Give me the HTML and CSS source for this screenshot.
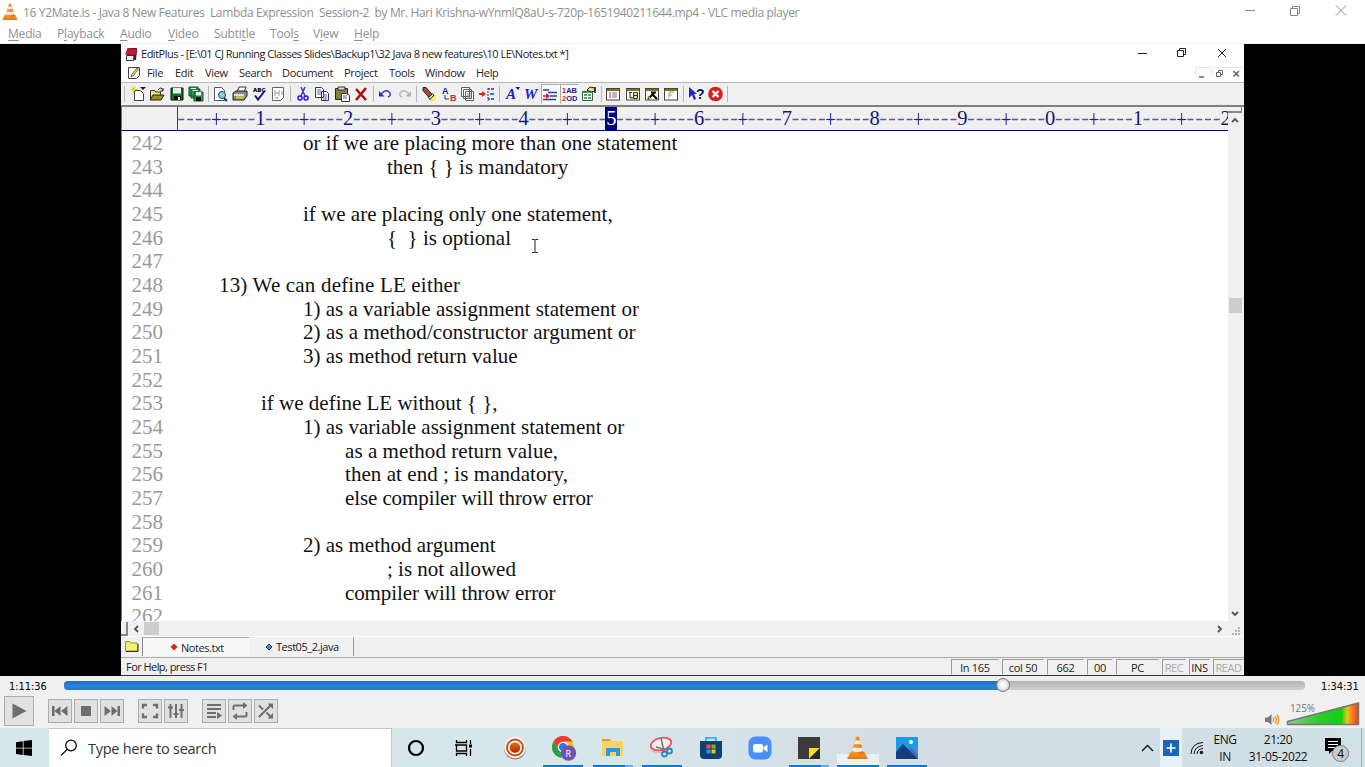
FILE: index.html
```html
<!DOCTYPE html>
<html lang="en">
<head>
<meta charset="utf-8">
<title>VLC media player</title>
<link rel="stylesheet" href="styles.css">
</head>
<body>
<svg class="defs" width="0" height="0">
  <defs>
    <linearGradient id="coneG"><stop offset="0" stop-color="#f6a042"/><stop offset=".5" stop-color="#f58a1c"/><stop offset="1" stop-color="#d9690a"/></linearGradient>
    <linearGradient id="volG"><stop offset="0" stop-color="#8fc98f"/><stop offset=".45" stop-color="#2bcb2b"/><stop offset=".76" stop-color="#14cf14"/><stop offset=".84" stop-color="#e8c813"/><stop offset=".91" stop-color="#f58220"/><stop offset="1" stop-color="#ee3a24"/></linearGradient>
    <linearGradient id="recG" x2="0" y2="1"><stop offset="0" stop-color="#f07010"/><stop offset="1" stop-color="#b02800"/></linearGradient>
    <symbol id="cone" viewBox="0 0 20 22">
      <path d="M3 15.5h14l2.5 6H.5z" fill="#f28a16"/><path d="M.5 20.5h19v1.2H.5z" fill="#c96808"/>
      <path d="M8.6 1.2Q10-.4 11.4 1.2L16 16.5q-6 3.4-12 0z" fill="url(#coneG)"/>
      <path d="M7.8 4.4h4.6l1.1 3.6H6.6zM5.6 11.2h9l1 3.2q-5.500 2-11 0z" fill="#ececec"/>
    </symbol>
    <symbol id="page" viewBox="0 0 16 16"><rect x="1.500" y="2.500" width="13" height="11.500" fill="#fff" stroke="#444"/><path d="M2 4h12" stroke="#777716" stroke-width="2"/></symbol>
  </defs>
</svg>
<header class="titlebar">
  <svg class="logo" width="16" height="17"><use href="#cone"/></svg>
  <span class="title">16 Y2Mate.is - Java 8 New Features&nbsp; Lambda Expression&nbsp; Session-2&nbsp; by Mr. Hari Krishna-wYnmlQ8aU-s-720p-1651940211644.mp4 - VLC media player</span>
  <svg class="winbtns" width="102" height="12" fill="none" stroke="#888"><path d="M0 5.500h10M45.500 3.500h7v7h-7zM47.500 3.500v-2h7v7h-2M91 .500l10 10M101 .500l-10 10"/></svg>
</header>
<nav class="menubar">
  <span><u>M</u>edia</span><span>P<u>l</u>ayback</span><span><u>A</u>udio</span><span><u>V</u>ideo</span><span>Subti<u>t</u>le</span><span>Tool<u>s</u></span><span>V<u>i</u>ew</span><span><u>H</u>elp</span>
</nav>

<main class="video">
<section class="editor">
  <div class="ed-title">
    <svg width="14" height="15" viewBox="0 0 14 15"><path d="M4 1h9v3l-1 9H2z" fill="#33272b"/><path d="M3.500 1l9.500 1-1 5-1.500 1L1 7.500z" fill="#c0163a"/><path d="M2.500 8.500h7.500l-.5 5H2.500z" fill="#eee" stroke="#333"/></svg>
    <span class="ed-name">EditPlus - [E:\01 CJ Running Classes Slides\Backup1\32 Java 8 new features\10 LE\Notes.txt *]</span>
    <svg class="ed-win" width="92" height="12" fill="none" stroke="#222"><path d="M0 6.500h9M39.500 3.500h6v6h-6zM41.500 3.500v-2h6v6h-2M80 2l8 8M88 2l-8 8"/></svg>
  </div>
  <div class="ed-menu">
    <svg width="14" height="14" viewBox="0 0 14 14"><path d="M1.500 1.500h11v8l-3 3h-8z" fill="#fff" stroke="#444"/><path d="M4 11l1-3 5-6 1.500 1-5 6.500z" fill="#ddd820" stroke="#555" stroke-width=".8"/></svg>
    <div class="ed-items"><span>File</span><span>Edit</span><span>View</span><span>Search</span><span>Document</span><span>Project</span><span>Tools</span><span>Window</span><span>Help</span></div>
    <svg class="mdi" width="49" height="12" fill="none" stroke="#666"><path d="M.5 8V.5H15V9M17.500 8V.5H49" stroke="#e6e6e6"/><path d="M4 10h5" stroke-width="1.500"/><path d="M21.500 5.500h4v4h-4zM23.500 5V3.500h4v4H26"/><path d="M38.500 4l5.500 5.500M44 4l-5.500 5.500" stroke-width="1.600"/></svg>
  </div>
  <div class="toolbar">
    <i class="grip"></i>
    <b><svg viewBox="0 0 16 16"><path d="M4.500 4.500h6l3 3v7h-9z" fill="#fff" stroke="#444"/><path d="M1 1l5 5M6 1L1 6M3.500 0v7M0 3.500h7" stroke="#e5e000"/><path d="M10 1h6l-3 3z" fill="#113"/></svg></b>
    <b><svg viewBox="0 0 16 16"><path d="M1.500 13.500v-9h4l1 1.500h5v3" fill="#eee480" stroke="#333"/><path d="M1 14l3-5h11l-3 5z" fill="#96921c" stroke="#222"/><path d="M9 4q3-4 5 0m0-2v3h-3" fill="none" stroke="#222"/></svg></b>
    <b><svg viewBox="0 0 16 16"><path d="M2 2h12v12H2z" fill="#087a1d" stroke="#111"/><path d="M4 2h8v5.500H4z" fill="#eee"/><path d="M5 10h7v4H5z" fill="#111"/><path d="M9 11h2v3H9z" fill="#eee"/></svg></b>
    <b><svg viewBox="0 0 16 16"><path d="M1 1h9v9H1zM3 3h9v9H3zM6 6h9v9H6z" fill="#36a04e" stroke="#153"/><path d="M3 2h5v1H3zM5 4h5v1H5zM8 6h5v3.500H8z" fill="#eee"/><path d="M8 11h5v4H8z" fill="#111"/></svg></b>
    <i class="sep"></i>
    <b><svg viewBox="0 0 16 16"><path d="M2.500 1.500h7l3 3v10h-10z" fill="#fff" stroke="#555"/><circle cx="10" cy="9" r="3.500" fill="#7bd6dc" stroke="#345"/><path d="M12 12l3 3" stroke="#16356b" stroke-width="2"/></svg></b>
    <b><svg viewBox="0 0 16 16"><path d="M5 6l2-5h7l-2 5" fill="#fff" stroke="#333"/><path d="M1 7l3-2h11v5l-3 4H1z" fill="#888" stroke="#222"/><path d="M2 9h10" stroke="#fff" stroke-width="1.500"/><path d="M4 11.500h8" stroke="#d7d721" stroke-width="2"/></svg></b>
    <b><svg viewBox="0 0 16 16"><text class="abc" x="2" y="6">ABC</text><path d="M4 9.500l3 4 7-9" fill="none" stroke="#181a82" stroke-width="2"/></svg></b>
    <b><svg viewBox="0 0 16 16"><path d="M2.500 1.500h11v10l-3 3h-8z" fill="#fff" stroke="#666"/><path d="M5 4v6M9 4v6M5 7h4M12 5v4M5 12h4" stroke="#999"/></svg></b>
    <i class="sep"></i>
    <b><svg viewBox="0 0 16 16" fill="none"><path d="M6 1l4 9M10 1L6 10" stroke="#2844b8" stroke-width="1.500"/><circle cx="5" cy="12" r="2" stroke="#21f" stroke-width="1.500"/><circle cx="11" cy="12" r="2" stroke="#21f" stroke-width="1.500"/></svg></b>
    <b><svg viewBox="0 0 16 16"><path d="M1.500 1.500h6l2 2v8h-8zM7.500 5.500h5l2 2v7h-7z" fill="#fff" stroke="#335"/><path d="M3 4h4M3 6h4M3 8h4M9 9h4M9 11h4M9 13h4" stroke="#4c60bb"/></svg></b>
    <b><svg viewBox="0 0 16 16"><path d="M1.500 2.500h12v11h-12z" fill="#84803d" stroke="#222"/><path d="M4 1h7v3H4z" fill="#ddd" stroke="#333"/><path d="M7.500 7.500h5l3 2v6h-8z" fill="#fff" stroke="#335"/><path d="M9 10h4M9 12h4" stroke="#4c60bb"/></svg></b>
    <b><svg viewBox="0 0 16 16"><path d="M3 3l10 11M13 2L3 14" stroke="#b00d0d" stroke-width="2.600"/></svg></b>
    <i class="sep"></i>
    <b><svg viewBox="0 0 16 16" fill="none" stroke="#2330cc" stroke-width="1.400"><path d="M4 8q6-6 9-1 1 3-2 4"/><path d="M2 5v5.500h5.500z" fill="#2330cc" stroke="none"/></svg></b>
    <b><svg viewBox="0 0 16 16" fill="none" stroke="#b4b4b4" stroke-width="1.400"><path d="M12 8Q6 2 3 7q-1 3 2 4"/><path d="M14 5v5.500H8.500z" fill="#b4b4b4" stroke="none"/></svg></b>
    <i class="sep"></i>
    <b><svg viewBox="0 0 16 16"><path d="M9 12l5-5 1 8-6 0z" fill="#f3ef55"/><path d="M2 1.500h3l6 7-3 3-6-7z" fill="#a54836" stroke="#222"/><path d="M7.500 11.500l4-3.500 1.500 1-4 4.500z" fill="#eee" stroke="#222"/></svg></b>
    <b><svg viewBox="0 0 16 16" fill="none"><text class="let" x="1" y="8" fill="#229">A</text><text class="let" x="9" y="15" fill="#d22">B</text><path d="M4 9v4h4" stroke="#338"/></svg></b>
    <b><svg viewBox="0 0 16 16"><path d="M1.500 1.500h8v9h-8zM3.500 3.500h8v9h-8zM5.500 5.500h8v9h-8z" fill="#fff" stroke="#565"/><path d="M7 8h5M7 10h5M7 12h5" stroke="#777"/></svg></b>
    <b><svg viewBox="0 0 16 16"><path d="M0 8h5" stroke="#d22" stroke-width="2"/><path d="M3 5l4 3-4 3z" fill="#d22"/><path d="M9 2v13" stroke="#223b9e" stroke-dasharray="2 1"/><path d="M9 3h2M12 3h3M11 8h4M9 13h2M12 13h3" stroke="#223b9e" stroke-width="1.500"/></svg></b>
    <i class="sep"></i>
    <b><svg viewBox="0 0 16 16"><text class="big" x="2" y="13">A</text><path d="M11.500 1h4.500l-2 3z" fill="#119"/></svg></b>
    <b><svg viewBox="0 0 16 16"><text class="big" x="1" y="13">W</text></svg></b>
    <b class="on"><svg viewBox="0 0 16 16"><path d="M1 4h6M6 6.500h9M8 10h7M1 13.500h13" stroke="#223b9e" stroke-width="1.300"/><path d="M1 10h5" stroke="#d22" stroke-width="1.500"/><path d="M4 7l4 3-4 3z" fill="#d22"/></svg></b>
    <b class="on"><svg viewBox="0 0 16 16"><text class="num" x="0" y="7"><tspan fill="#d22">1</tspan>AB</text><text class="num" x="0" y="15"><tspan fill="#d22">2</tspan>OD</text></svg></b>
    <b><svg viewBox="0 0 16 16"><path d="M1.500 5.500h10v9h-10z" fill="#fff" stroke="#276b35"/><path d="M1 6h11M3 9h3M3 12h3M7 9h3M7 12h3" stroke="#2c7a40" stroke-width="1.500"/><path d="M6 4l3-3 5 1v3l-4 1z" fill="#e5df6e" stroke="#222"/><path d="M14 1v6" stroke="#222" stroke-width="1.500"/></svg></b>
    <i class="sep"></i>
    <b><svg viewBox="0 0 16 16"><use href="#page"/><path d="M4 7h2M4 9h2M4 11h2" stroke="#d22"/><path d="M7 7h5M7 9h5M7 11h5" stroke="#777"/></svg></b>
    <b><svg viewBox="0 0 16 16"><use href="#page"/><path d="M4 6.500h3M5 7v5h3M8.500 6.500h4v6h-4zM8.500 9.500h4" fill="#dda" stroke="#333"/></svg></b>
    <b><svg viewBox="0 0 16 16"><use href="#page"/><path d="M4 13l6-6M7 6.500h5M8 8l5 5" stroke="#111" stroke-width="2.200"/><path d="M4 10l2 3" stroke="#b8ad22" stroke-width="1.500"/></svg></b>
    <b><svg viewBox="0 0 16 16"><use href="#page"/><path d="M6 12V6h5M6 9h3" fill="none" stroke="#999"/></svg></b>
    <i class="sep"></i>
    <b><svg viewBox="0 0 16 16"><path d="M1 1l8 7H6l2 5-2 1-2-5-3 3z" fill="#1626dd"/><text class="q" x="8" y="13">?</text></svg></b>
    <b><svg viewBox="0 0 16 16"><circle cx="8.500" cy="8" r="7.300" fill="#dc2018"/><path d="M5.500 5l6 6M11.500 5l-6 6" stroke="#fff" stroke-width="2.300"/></svg></b>
    <i class="sep"></i>
  </div>
  <div class="work">
    <div class="doc">
      <svg class="ruler" width="1106" height="24">
        <path d="M55.500 0v24" stroke="#3333aa"/>
        <path d="M56.300 12.500H1106" stroke="#5454a8" stroke-width="1.300" stroke-dasharray="6 2.775"/>
        <g class="ticks"></g>
        <rect x="483" y="0" width="12" height="23" fill="#000080"/>
      </svg>
      <div class="code">
        <div><i>242</i><p class="t3">or if we are placing more than one statement</p></div>
        <div><i>243</i><p class="t5">then { } is mandatory</p></div>
        <div><i>244</i></div>
        <div><i>245</i><p class="t3">if we are placing only one statement,</p></div>
        <div><i>246</i><p class="t5">{&nbsp; } is optional</p></div>
        <div><i>247</i></div>
        <div><i>248</i><p class="t1 wide">13) We can define LE either</p></div>
        <div><i>249</i><p class="t3">1) as a variable assignment statement or</p></div>
        <div><i>250</i><p class="t3 loose">2) as a method/constructor argument or</p></div>
        <div><i>251</i><p class="t3">3) as method return value</p></div>
        <div><i>252</i></div>
        <div><i>253</i><p class="t2">if we define LE without { },</p></div>
        <div><i>254</i><p class="t3">1) as variable assignment statement or</p></div>
        <div><i>255</i><p class="t4 loose">as a method return value,</p></div>
        <div><i>256</i><p class="t4 loose">then at end ; is mandatory,</p></div>
        <div><i>257</i><p class="t4 tight">else compiler will throw error</p></div>
        <div><i>258</i></div>
        <div><i>259</i><p class="t3">2) as method argument</p></div>
        <div><i>260</i><p class="t5">; is not allowed</p></div>
        <div><i>261</i><p class="t4 tight">compiler will throw error</p></div>
        <div><i>262</i></div>
        <svg class="ibeam" width="8" height="14" fill="none" stroke="#222"><path d="M1 .500h2.500l.5.500.5-.5H7M4 1v12M1 13.500h2.500l.5-.5.5.5H7"/></svg>
      </div>
    </div>
    <div class="vscroll">
      <span class="split"></span>
      <svg width="8" height="6" fill="none" stroke="#555" stroke-width="1.800"><path d="M1 5l3-3 3 3"/></svg>
      <span class="vthumb"></span>
      <svg width="8" height="6" fill="none" stroke="#555" stroke-width="1.800"><path d="M1 1l3 3 3-3"/></svg>
    </div>
  </div>
  <div class="hscroll">
    <span class="hsplit"></span>
    <svg width="6" height="8" fill="none" stroke="#555" stroke-width="1.800"><path d="M5 1L2 4l3 3"/></svg>
    <span class="hthumb"></span>
    <svg class="hr" width="6" height="8" fill="none" stroke="#555" stroke-width="1.800"><path d="M1 1l3 3-3 3"/></svg>
    <svg class="size" width="8" height="8" fill="#b5b5b5"><path d="M6 0h2v2H6zM3 3h2v2H3zM6 3h2v2H6zM0 6h2v2H0zM3 6h2v2H3zM6 6h2v2H6z"/></svg>
  </div>
  <div class="tabs">
    <svg width="21" height="20"><path d="M4.500 4.500h4l1 1.500h7v8h-12z" fill="#f3ef78" stroke="#999333"/><path d="M5 14.500h12V7" fill="none" stroke="#333"/></svg>
    <div class="tab active"><svg width="8" height="8"><path d="M4 .5L7.500 4 4 7.500.5 4z" fill="#d42a1c"/></svg>Notes.txt</div>
    <div class="tab"><svg width="8" height="8"><path d="M4 1L7 4 4 7 1 4z" fill="#2a96dc" stroke="#237"/></svg>Test05_2.java</div>
  </div>
  <div class="status"><span class="help">For Help, press F1</span><span class="cell">ln 165</span><span class="cell">col 50</span><span class="cell">662</span><span class="cell">00</span><span class="cell">PC</span><span class="cell dim">REC</span><span class="cell">INS</span><span class="cell dim">READ</span></div>
</section>
</main>

<section class="controls">
  <div class="seekrow"><span class="time">1:11:36</span><div class="seek"><div class="played"></div><span class="knob"></span></div><span class="time end">1:34:31</span></div>
  <div class="btnrow">
    <button class="play"><svg width="28" height="28"><path d="M7.500 6.500L21.500 14l-14 7.500z" fill="#6e6e6e"/></svg></button>
    <div class="grp">
      <button><svg width="22" height="22" fill="#6e6e6e"><path d="M3 6h2.500v10H3zM11.500 6v10L5.500 11zM18.500 6v10l-6.500-5z"/></svg></button>
      <button><svg width="22" height="22" fill="#6e6e6e"><path d="M6 6h10v10H6z"/></svg></button>
      <button><svg width="22" height="22" fill="#6e6e6e"><path d="M16.500 6H19v10h-2.500zM10.500 6v10l6-5zM3.500 6v10l6.500-5z"/></svg></button>
    </div>
    <div class="grp">
      <button><svg width="22" height="22" fill="none" stroke="#6e6e6e" stroke-width="2.400"><path d="M4 8.500V5h4M14 5h4v3.500M4 13.500V17h4M14 17h4v-3.500"/></svg></button>
      <button><svg width="22" height="22" fill="none" stroke="#6e6e6e" stroke-width="2"><path d="M5.500 4v14M11 4v14M16.500 4v14M3 7.500h5M8.500 14h5M14 10h5"/></svg></button>
    </div>
    <div class="grp">
      <button><svg width="22" height="22" fill="none" stroke="#6e6e6e" stroke-width="2"><path d="M4 5h14M4 9h14M4 13h9M4 17h9"/><path d="M14 12l5 3.500-5 3.500z" fill="#6e6e6e" stroke="none"/></svg></button>
      <button><svg width="22" height="22" fill="none" stroke="#6e6e6e" stroke-width="2"><path d="M4.500 10V6.500q0-1 1-1H15M17.500 12v3.500q0 1-1 1H7"/><path d="M14 2l4.500 3.500L14 9zM8 13l-4.500 3.500L8 20z" fill="#6e6e6e" stroke="none"/></svg></button>
      <button><svg width="22" height="22" fill="none" stroke="#6e6e6e" stroke-width="2"><path d="M4 5.500l4 4M11.500 12.500l4 4M4 17L15.500 5.500"/><path d="M12.500 3.500H18V9zM18 13v5.500h-5.500z" fill="#6e6e6e" stroke="none"/></svg></button>
    </div>
    <div class="volume">
      <svg width="16" height="14" fill="none"><path d="M1 4.500h3L7.500 1v11L4 9H1z" fill="#777"/><path d="M9 4.500q1.500 2 0 4.500M11 3q2.600 3.500 0 7.500M13 1.500q3.600 5 0 10.500" stroke="#f09a2c" stroke-width="1.400"/></svg>
      <div class="meter"><svg width="74" height="24"><path d="M1.500 19.500L72.500 1v21.500h-71z" fill="url(#volG)" stroke="#777" stroke-width="1.500" stroke-linejoin="round"/></svg><span class="pct">125%</span></div>
    </div>
  </div>
</section>

<footer class="taskbar">
  <div class="start"><svg width="16" height="16"><path d="M0 2.200l6.800-1v6.500H0zM7.600 1.100L16 0v7.700H7.600zM0 8.400h6.800V15L0 14zM7.600 8.400H16V16l-8.400-1.100z"/></svg></div>
  <div class="search"><svg width="18" height="18" fill="none" stroke="#111" stroke-width="1.300"><circle cx="11" cy="6.500" r="5.300"/><path d="M7 10.500L1 16.500"/></svg><span>Type here to search</span></div>
  <div class="apps">
    <div><svg width="18" height="18" fill="none" stroke="#000" stroke-width="2.200"><circle cx="9" cy="9" r="7"/></svg></div>
    <div><svg class="back" width="18" height="16" fill="none" stroke="#000" stroke-width="1.300"><path d="M1.500 0v2.500h10V0M1.500 16v-2.500h10V16M0 5h11.500v6H1.500V5M15.500 0v4M15.500 9v7"/><path d="M14 4.500h3v3h-3z" fill="#000" stroke="none"/></svg></div>
    <div><svg class="fwd" width="24" height="24"><circle cx="12" cy="12.500" r="10.800" fill="#a56b58"/><circle cx="12" cy="11.500" r="10.700" fill="#fff"/><circle cx="12" cy="11.500" r="8" fill="#fff" stroke="#d04a10" stroke-width="2"/><circle cx="12" cy="11.500" r="5.300" fill="url(#recG)"/></svg></div>
    <div class="run"><svg class="fwd" width="26" height="26"><circle cx="12" cy="12" r="11" fill="#f9c42d"/><path d="M2.500 6.500A11 11 0 0 1 21.500 6.500H12l-4.500 8z" fill="#e83e31"/><path d="M2.500 6.500l5.500 9 4 2-2 5.400A11 11 0 0 1 2.500 6.500" fill="#2b9f4b"/><circle cx="12" cy="12" r="5.200" fill="#fff"/><circle cx="12" cy="12" r="4" fill="#2b79e3"/><circle cx="17.500" cy="18" r="7.700" fill="#7252b5"/><text class="r" x="14.500" y="21.500">R</text></svg></div>
    <div class="run multi"><svg class="fwd" width="22" height="20"><path d="M0 1h8l1 2H0z" fill="#d9a01b"/><path d="M0 3h21v15H0z" fill="#fbd263"/><path d="M4 10h14v8h-4v-4H8v4H4z" fill="#2f96e6"/></svg></div>
    <div class="run"><svg class="fwd" width="26" height="24" fill="none"><ellipse cx="12" cy="8" rx="10.500" ry="6" transform="rotate(-14 12 8)" fill="#f5eded" stroke="#e45557" stroke-width="1.800"/><path d="M2 13q2 4 10 3" stroke="#f3a8a8" stroke-width="1.500"/><path d="M12 2l3 13M7 11l11 3" stroke="#777" stroke-width="1.500"/><circle cx="15.500" cy="18" r="2.500" stroke="#2789ba" stroke-width="1.800"/><circle cx="20.500" cy="15" r="2.500" stroke="#2789ba" stroke-width="1.800"/></svg></div>
    <div><svg class="fwd" width="24" height="24"><path d="M7 5V2h10v3" fill="none" stroke="#35bff0" stroke-width="2"/><path d="M1 5h22v14q0 4-4 4H5q-4 0-4-4z" fill="#123f75"/><path d="M7.500 8.500h4v4h-4z" fill="#f25022"/><path d="M12.500 8.500h4v4h-4z" fill="#7fba00"/><path d="M7.500 13.500h4v4h-4z" fill="#00a4ef"/><path d="M12.500 13.500h4v4h-4z" fill="#ffb900"/></svg></div>
    <div><svg width="24" height="24"><rect x=".5" y=".5" width="23" height="23" rx="7" fill="#4b8ef8"/><rect x="5" y="8" width="10" height="8.500" rx="2" fill="#fff"/><path d="M15.500 11l4-2.500v7.500l-4-2.500z" fill="#fff"/></svg></div>
    <div class="run multi"><svg width="22" height="22"><path d="M0 0h22v22H0z" fill="#3b3b3b"/><path d="M11 11h11L11 22z" fill="#ffdc18"/><path d="M22 11v11H11z" fill="#2a2a2a"/></svg></div>
    <div class="run current"><svg width="21" height="23"><use href="#cone"/></svg></div>
    <div class="run"><svg width="22" height="22"><path d="M0 0h22v22H0z" fill="#1c9ce6"/><path d="M22 9v13H9z" fill="#5f7fd6"/><path d="M10 14l5-4 7 8v4z" fill="#4a6cc2"/><path d="M0 15l7-8 15 15H0z" fill="#123f7c"/><circle cx="15" cy="5" r="2" fill="#fff"/></svg></div>
  </div>
  <div class="tray">
    <svg class="chev" width="13" height="8" fill="none" stroke="#111" stroke-width="1.400"><path d="M1 7l5.500-5.500L12 7"/></svg>
    <div class="plus"><svg width="16" height="16"><path d="M0 0h16v16H0z" fill="#1b66bb"/><path d="M3.500 8h9M8 3.500v9" stroke="#fff" stroke-width="1.600"/></svg></div>
    <svg class="wifi" width="14" height="14" fill="none" stroke="#111"><path d="M1 13Q1.500 2 13 1.500M4 13Q4.500 5.500 13 4.500M7 13q.5-5 6-5.500"/><circle cx="11.500" cy="11.500" r="1.700" fill="#111" stroke="none"/></svg>
    <div class="two lang"><span>ENG</span><span>IN</span></div>
    <div class="two clock"><span>21:20</span><span>31-05-2022</span></div>
    <svg class="note" width="26" height="26"><path d="M0 0h16v13H7l-3 3v-3H0z"/><path d="M3 3.500h10M3 6.500h10M3 9.500h7" stroke="#fff" stroke-width="1.200"/><circle cx="15.500" cy="15.500" r="8" fill="#ccc" stroke="#777"/><text x="12.300" y="20">4</text></svg>
    <i class="peek"></i>
  </div>
</footer>
<script src="ruler.js"></script>
</body>
</html>
```
FILE: ruler.js
```js
// Fills the column ruler: a figure every ten columns, a cross at every fifth.
(function () {
  var NS = 'http://www.w3.org/2000/svg', step = 8.775, origin = 50.5;
  var ruler = document.querySelector('.ruler');
  var ticks = ruler.querySelector('.ticks');
  function add(parent, name, attrs, text) {
    var el = document.createElementNS(NS, name);
    for (var key in attrs) el.setAttribute(key, attrs[key]);
    if (text) el.textContent = text;
    parent.appendChild(el);
  }
  for (var col = 5; col <= 120; col += 5) {
    var x = origin + col * step;
    if (col % 10) {
      add(ticks, 'path', { d: 'M' + x + ' 6v12M' + (x - 4.500) + ' 12.500h9', stroke: '#22228c' });
    } else {
      add(ticks, 'rect', { x: x - 5, y: 5, width: 10, height: 15, fill: '#f0f0f0' });
      add(ruler, 'text', { x: x, y: 18, 'class': col === 50 ? 'here' : 'digit' }, String(col / 10 % 10));
    }
  }
})();
```
FILE: styles.css
```css
* { box-sizing: border-box; }
body { margin: 0; width: 1365px; height: 767px; overflow: hidden; display: flex; flex-direction: column; font-family: "Open Sans", "Noto Sans", sans-serif; background: #f0f0f0; }
svg { display: block; flex: none; }
.defs { position: absolute; }
i { font-style: normal; }
p { margin: 0; }

.titlebar { height: 24px; flex: none; background: #fff; display: flex; align-items: center; padding: 0 18px 0 2px; color: #8f8f8f; }
.title { margin-left: 5px; font-size: 12px; letter-spacing: -0.35px; white-space: nowrap; }
.logo { margin-top: -2px; }
.winbtns { margin-left: auto; margin-top: -3px; }
.menubar { height: 20px; flex: none; background: #fff; padding-left: 8px; display: grid; grid-template-columns: 49px 63px 48px 46px 56px 43px 41px 40px; line-height: 20px; font-size: 12px; letter-spacing: -0.2px; color: #8f8f8f; border-bottom: 1px solid #f2f2f2; }
.menubar u { text-underline-offset: 2px; }

.video { height: 632px; flex: none; background: #000; padding: 0 121px; }
.editor { height: 632px; width: 1123px; background: #f0f0f0; display: flex; flex-direction: column; border-bottom: 1px solid #333; font-size: 11px; color: #222; }
.editor > div { flex: none; }
.ed-title { height: 20px; background: #fff; display: flex; align-items: center; padding: 0 14px 0 3px; }
.ed-name { margin: -2px 0 0 3px; letter-spacing: -0.485px; white-space: nowrap; }
.ed-win { margin-left: auto; margin-top: -2px; }
.ed-menu { height: 18px; background: #fff; display: flex; align-items: center; padding: 0 0 0 6px; }
.ed-items { margin: -2px 0 0 6px; display: grid; grid-template-columns: 28px 30px 34px 43px 62px 45px 36px 51px 40px; letter-spacing: -0.32px; }
.mdi { margin-left: auto; margin-top: -1px; }
.toolbar { height: 23px; border-top: 1px solid #b4b4b4; display: flex; align-items: center; }
.toolbar b { width: 19.35px; height: 20px; display: flex; align-items: center; justify-content: center; }
.toolbar b svg { width: 16px; height: 16px; overflow: visible; }
.toolbar .on { background: #f8f8f8; border: 1px solid #aaa; border-right-color: #fff; border-bottom-color: #fff; }
.grip, .sep { width: 5.1px; height: 16px; flex: none; background: linear-gradient(#b5b5b5, #b5b5b5) center / 1px 100% no-repeat; }
.grip { width: 7.3px; }
.abc { font: bold 5.500px "DejaVu Sans", sans-serif; }
.let { font: bold 9px "Liberation Sans", sans-serif; }
.big { font: italic bold 15px "Liberation Serif", serif; fill: #1522cc; }
.num { font: bold 7.5px "Liberation Sans", sans-serif; fill: #228; }
.q { font: bold 14px "Liberation Sans", sans-serif; fill: #114; }

.work { height: 516px; display: flex; border-top: 2px solid #808080; }
.doc { width: 1107px; border-left: 1px solid #777; overflow: hidden; }
.ruler { background: #f0f0f0; border-bottom: 1px solid #000080; }
.ruler text { font: 20.500px "Liberation Serif", serif; text-anchor: middle; }
.ruler .digit { fill: #16167e; }
.ruler .here { fill: #fff; }
.code { position: relative; height: 490px; padding-top: 1px; overflow: hidden; background: #fff; font: 21px/23.68px "Liberation Serif", serif; color: #111; }
.code div { height: 23.68px; display: flex; }
.code i { width: 55px; padding-left: 9.5px; color: #999; flex: none; }
.code p { white-space: pre; }
.code .wide { letter-spacing: 0.18px; }
.code .loose { letter-spacing: 0.06px; }
.code .tight { letter-spacing: -0.1px; }
.t1 { padding-left: 42px; }
.t2 { padding-left: 84px; }
.t3 { padding-left: 126px; }
.t4 { padding-left: 168px; }
.t5 { padding-left: 210px; }
.ibeam { position: absolute; left: 409px; top: 108px; }
.vscroll { width: 14px; display: flex; flex-direction: column; align-items: center; padding-bottom: 4px; }
.split { width: 14px; height: 6px; border: 2px solid #888; border-width: 0 1px 2px 0; margin-bottom: 4px; }
.vthumb { width: 13px; height: 15px; background: #cdcdcd; margin: 175px 0 auto; }
.hscroll { height: 15px; display: flex; align-items: center; padding-right: 4px; }
.hsplit { width: 7px; height: 14px; border: solid #888; border-width: 0 2px 2px 0; margin-right: 5px; }
.hthumb { width: 15px; height: 13px; background: #cdcdcd; margin-left: 5px; }
.hr { margin-left: auto; }
.size { margin: 4px 0 0 9px; }
.tabs { height: 21px; display: flex; border-top: 1px solid #fff; }
.tab { display: flex; align-items: center; gap: 3px; border-right: 1px solid #999; width: 105px; padding-left: 16px; letter-spacing: -0.45px; height: 19px; }
.tab.active { width: 107px; background: #f9f9f9; border-left: 1px solid #888; border-top: 1px solid #aaa; border-right: 0; padding-left: 27px; }
.status { height: 18px; border-top: 1px solid #aaa; display: flex; padding: 1px 0 0 5px; gap: 3px; line-height: 15px; letter-spacing: -0.25px; }
.help { flex: 1; letter-spacing: -0.55px; }
.cell { border: 1px solid #aaa; border-color: #999 #f0f0f0 #f0f0f0 #999; width: 48px; height: 16px; text-align: center; }
.cell:nth-child(3) { width: 42px; }
.cell:nth-child(4) { width: 37px; }
.cell:nth-child(5) { width: 26px; }
.cell:nth-child(6) { width: 43px; }
.cell:nth-child(7) { width: 24px; }
.cell:nth-child(8) { width: 21px; }
.cell:nth-child(9) { width: 31px; }
.dim { color: #aaa; letter-spacing: -0.5px; }

.controls { height: 52px; flex: none; background: #f0f0f0; }
.seekrow { height: 20px; display: flex; align-items: center; padding-left: 9px; font: 11px "DejaVu Sans Condensed", "DejaVu Sans", sans-serif; letter-spacing: -0.05px; }
.time { width: 55px; }
.end { width: 44px; margin-left: 16px; }
.seek { position: relative; width: 1241px; height: 9px; margin-top: -2px; border-radius: 4px; background: linear-gradient(#b4b4b4, #cfcfcf); }
.played { width: 939px; height: 9px; border-radius: 4px 0 0 4px; background: linear-gradient(#1c6fc0, #2b85d8 60%, #257ac8); }
.knob { position: absolute; left: 932px; top: -3px; width: 14px; height: 14px; border-radius: 50%; border: 1px solid #777; background: radial-gradient(#fff 20%, #ccc 80%); }
.btnrow { display: flex; height: 30px; align-items: center; padding: 0 5px 0 4px; gap: 14px; }
button { width: 24px; height: 24px; padding: 0; border: 1px solid #adadad; background: #e1e1e1; }
.play { width: 30px; height: 30px; }
.grp { display: flex; gap: 2px; }
.volume { margin: 7px 0 0 auto; display: flex; align-items: flex-end; gap: 6px; }
.meter { position: relative; margin-bottom: 1px; }
.pct { position: absolute; left: 4px; top: 0; font-size: 10px; line-height: 12px; color: #777; letter-spacing: -0.1px; }

.taskbar { height: 39px; flex: none; display: flex; background: linear-gradient(90deg, #d4e5ec, #d7e6ea 45%, #d3dde5 65%, #d0e0e6); }
.start { width: 49px; padding: 12px 0 0 16px; }
.search { width: 343px; background: #fff; border: solid #c5c5c5; border-width: 1px 1px 0 0; display: flex; align-items: center; padding-left: 11px; gap: 10px; font-size: 14.500px; letter-spacing: -0.27px; color: #333; }
.apps { display: flex; margin-left: -1px; }
.apps div { position: relative; width: 49.150px; display: flex; align-items: center; justify-content: center; }
.apps .fwd { margin-left: 2px; }
.apps .back { margin-right: 2px; }
.run::after { content: ""; position: absolute; left: 5px; bottom: 0; width: 40px; height: 2px; background: #0a78d4; }
.run.multi::after { background: linear-gradient(90deg, #0a78d4 32px, #67aee6 32px); }
.current { background: linear-gradient(#eaf0f3, #eaf0f3) 4px 26px / 42px 13px no-repeat; }
.run.current::after { left: 4px; width: 42px; }
.tray { margin-left: auto; display: flex; align-items: center; font-size: 12px; color: #111; }
.plus { width: 22px; height: 39px; background: #e7f0f5; display: flex; align-items: center; justify-content: center; margin: 0 8px 0 6px; }
.two { display: flex; flex-direction: column; text-align: center; line-height: 17px; letter-spacing: -0.4px; }
.lang { width: 26px; margin-left: 8px; }
.clock { width: 62px; margin: 0 16px 0 9px; }
.note { margin-top: 6px; }
.note text { font-size: 12px; }
.peek { width: 1px; height: 39px; background: #9fb0b8; margin: 0 3px 0 10px; }
.r { font-size: 9px; fill: #fff; }
```
